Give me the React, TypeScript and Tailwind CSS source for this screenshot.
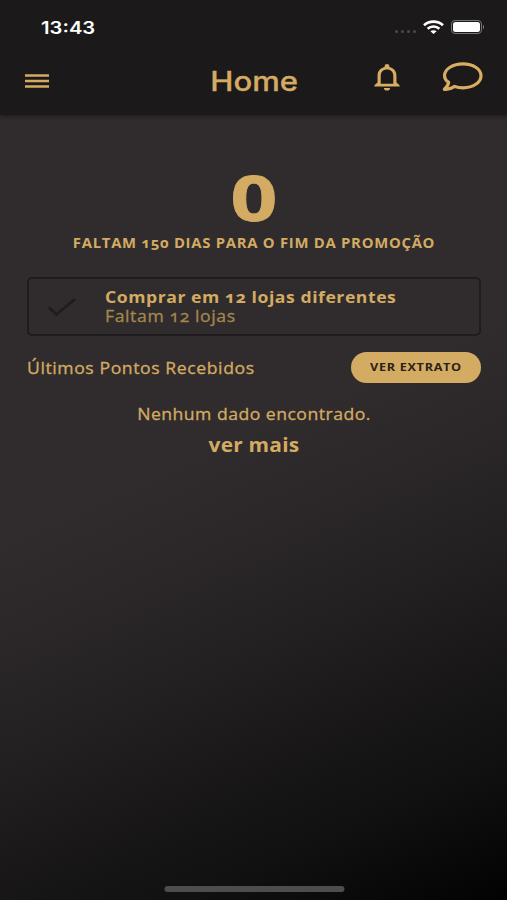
import type { ReactNode } from 'react';
import { MdNotificationsNone } from 'react-icons/md';

function StatusBar() {
    return (
        <div className="flex h-[54px] items-center justify-between pr-[23px] pl-[41px]">
            <span className="mt-[3px] origin-left scale-x-[1.19] font-['Inter',sans-serif] text-[17px] font-semibold text-white">13:43</span>
            <div className="flex items-center">
                <div className="mt-[9px] mr-[7px] flex gap-[3px]">
                    <i className="h-[3px] w-[3px] rounded-full bg-[#4c4b4c]" />
                    <i className="h-[3px] w-[3px] rounded-full bg-[#4c4b4c]" />
                    <i className="h-[3px] w-[3px] rounded-full bg-[#4c4b4c]" />
                    <i className="h-[3px] w-[3px] rounded-full bg-[#4c4b4c]" />
                </div>
                <svg width="21" height="14" viewBox="0 0 21 14" fill="none" stroke="white" strokeWidth="2.6">
                    <path d="M1 5.2C6.300 .4 14.700 .4 20 5.200" />
                    <path d="M4.600 8.700c3.300-3 8.500-3 11.800 0" />
                    <path d="M7.400 11.300c1.800-1.500 4.400-1.500 6.200 0L10.500 14z" fill="white" stroke="none" />
                </svg>
                <div className="ml-[7px] h-[14px] w-[31px] rounded-[4px] border border-[#777] p-[1px]">
                    <div className="h-full w-full rounded-[2.500px] bg-white" />
                </div>
                <i className="ml-px h-[4px] w-[1.500px] rounded-r bg-[#777]" />
            </div>
        </div>
    );
}

function Header() {
    return (
        <header className="h-[115px] bg-[#1b191a] shadow-[0_1px_5px_rgba(0,0,0,0.45)]">
            <StatusBar />
            <div className="grid grid-cols-[1fr_auto_1fr] items-center pr-[24px] pl-[25px]">
                <svg width="24" height="16" viewBox="0 0 24 16" fill="none" stroke="#d3ab63" strokeWidth="2.500">
                    <path d="M0 2.500h24M0 8h24M0 13.500h24" />
                </svg>
                <h1 className="scale-x-[1.150] pt-[1px] font-['Inter',sans-serif] text-[27px] leading-[53px] font-medium text-[#d3ab63] [-webkit-text-stroke:0.3px]">Home</h1>
                <div className="-mt-[8px] flex items-center justify-end gap-[39px]">
                    <MdNotificationsNone className="scale-x-[1.180] scale-y-[1.020]" size={32} color="#d9ad61" />
                    <svg className="-mt-[2px]" width="41" height="29" viewBox="0 0 41 29" fill="none" stroke="#d9ad61" strokeWidth="3.200" strokeLinejoin="round">
                        <path d="M21 1.800c10 0 18 5.200 18 11.900S31 25.800 21 25.800c-3 0-5.800-.5-8.300-1.400C9.800 26.400 6 27.600 2.400 27.300c2.400-2.100 3.900-4.600 4.200-7C4 18.500 2.500 16.200 2.500 13.700 2.500 7 11 1.800 21 1.800z" />
                    </svg>
                </div>
            </div>
        </header>
    );
}

function TaskCard({ title, children }: { title: string; children: ReactNode }) {
    return (
        <div className="flex h-[59px] items-center rounded-[5px] border-2 border-[#1f1c1d] pl-[18px]">
            <svg width="32" height="24" viewBox="0 0 32 24" fill="none" stroke="#1f1c1d" strokeWidth="2.500">
                <path d="M2 12.500l7.500 7L28 4" />
            </svg>
            <div className="ml-[26px]">
                <p className="origin-left scale-x-[1.100] text-[16px] leading-[19px] font-bold tracking-[0.5px] whitespace-nowrap">{title}</p>
                <p className="origin-left scale-x-[1.100] text-[16px] leading-[19px] tracking-[0.55px] whitespace-nowrap text-[#a5874f] [-webkit-text-stroke:0.3px]">{children}</p>
            </div>
        </div>
    );
}

export default function App() {
    return (
        <div className="flex h-[900px] w-[507px] flex-col overflow-hidden bg-[linear-gradient(156deg,#302c2d_48%,#2b2728_58%,#222021_68%,#1a1819_77%,#111111_87%,#020202_100%)] font-['Open_Sans',sans-serif] text-[#d3ab63] oldstyle-nums">
            <Header />
            <main className="flex-1 pr-[26px] pl-[27px]">
                <div className="pt-[45px] text-center">
                    <p className="scale-x-[1.300] text-[63px] leading-[73px] font-bold lining-nums [-webkit-text-stroke:0.8px]">0</p>
                    <p className="scale-x-[1.100] text-[13.500px] leading-[20px] font-bold tracking-[0.660px] whitespace-nowrap">FALTAM 150 DIAS PARA O FIM DA PROMOÇÃO</p>
                </div>
                <div className="mt-[24px]">
                    <TaskCard title="Comprar em 12 lojas diferentes">Faltam 12 lojas</TaskCard>
                </div>
                <div className="mt-[16px] flex items-center justify-between">
                    <h2 className="origin-left scale-x-[1.100] text-[16px] tracking-[0.53px] [-webkit-text-stroke:0.3px]">Últimos Pontos Recebidos</h2>
                    <button className="flex h-[31px] w-[130px] items-center justify-center rounded-full bg-[#d3ab63] text-[11px] font-bold text-[#2c2217]">
                        <span className="scale-x-[1.150] tracking-[0.6px]">VER EXTRATO</span>
                    </button>
                </div>
                <p className="mt-[19px] scale-x-[1.100] text-center text-[16px] leading-[24px] tracking-[0.44px] [-webkit-text-stroke:0.3px]">Nenhum dado encontrado.</p>
                <p className="mt-[5px] scale-x-[1.100] text-center text-[19px] leading-[28px] font-bold tracking-[0.2px]">ver mais</p>
            </main>
            <div className="mx-auto mb-[8px] h-[6px] w-[180px] translate-x-[0.5px] rounded-full bg-[#4d4d4d]" />
        </div>
    );
}
